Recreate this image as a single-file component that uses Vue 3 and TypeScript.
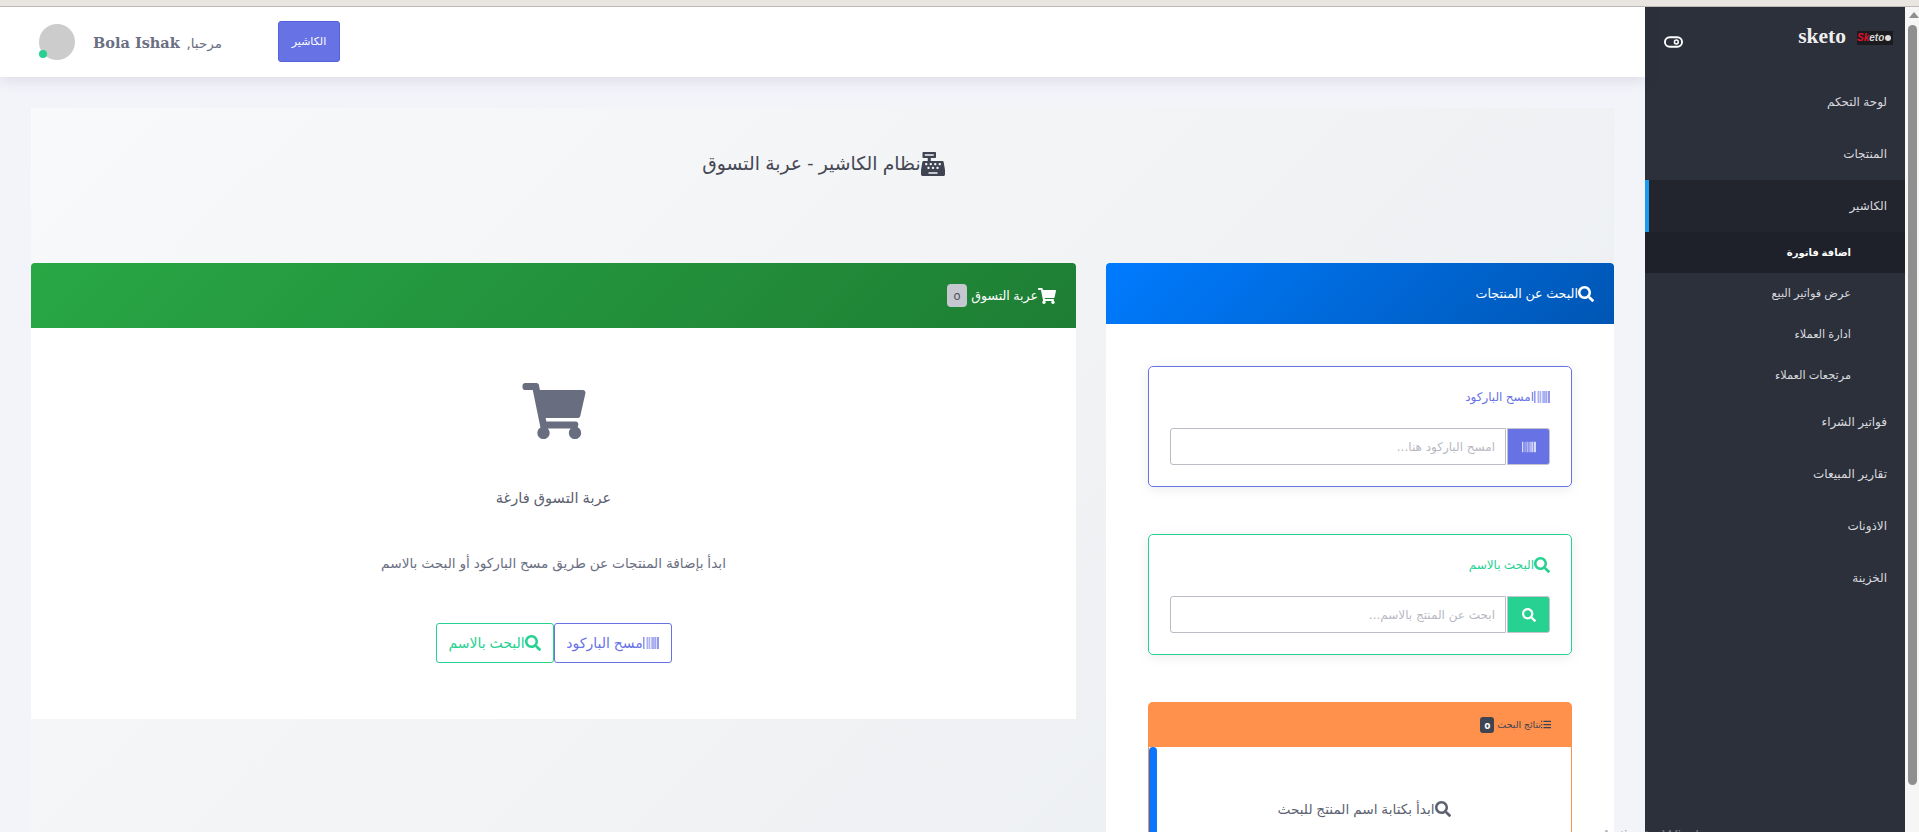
<script setup lang="ts">
const searchPath = "M505 442.7L405.3 343c-4.5-4.5-10.6-7-17-7H372c27.6-35.3 44-79.7 44-128C416 93.1 322.9 0 208 0S0 93.1 0 208s93.1 208 208 208c48.3 0 92.7-16.4 128-44v16.3c0 6.4 2.5 12.5 7 17l99.7 99.7c9.4 9.4 24.6 9.4 33.9 0l28.3-28.3c9.4-9.4 9.4-24.6.1-34zM208 336c-70.7 0-128-57.2-128-128 0-70.7 57.2-128 128-128 70.7 0 128 57.2 128 128 0 70.7-57.2 128-128 128z";
const cartPath = "M528.12 301.319l47.273-208C578.806 78.301 567.391 64 551.99 64H159.208l-9.166-44.81C147.758 8.021 137.93 0 126.529 0H24C10.745 0 0 10.745 0 24v16c0 13.255 10.745 24 24 24h69.883l70.248 343.435C147.325 417.1 136 435.222 136 456c0 30.928 25.072 56 56 56s56-25.072 56-56c0-15.674-6.447-29.835-16.824-40h209.647C430.447 426.165 424 440.326 424 456c0 30.928 25.072 56 56 56s56-25.072 56-56c0-22.172-12.888-41.332-31.579-50.405l5.517-24.276c3.413-15.018-8.002-29.319-23.403-29.319H218.117l-6.545-32h293.145c11.206 0 20.92-7.754 23.403-18.681z";
const barcodePath = "M0 448V64h18v384H0zm26.857-.273V64H36v383.727h-9.143zm27.143 0V64h8.857v383.727H54zm44.857 0V64h8.857v383.727h-8.857zm36 0V64h17.714v383.727h-17.714zm44.857 0V64h8.857v383.727h-8.857zm18 0V64h8.857v383.727h-8.857zm18 0V64h8.857v383.727h-8.857zm35.715 0V64h18v383.727h-18zm44.857 0V64h18v383.727h-18zm35.999 0V64h18.001v383.727h-18.001zm36.001 0V64h18.001v383.727h-18.001zm26.857 0V64h18v383.727h-18zm45.143 0V64h26.857v383.727h-26.857zm35.714 0V64h9.143v383.727H476zm18 .273V64h18v384h-18z";
const registerPath = "M511.1 378.8l-26.7-160c-2.6-15.4-15.9-26.7-31.6-26.7H208v-64h96c8.8 0 16-7.2 16-16V16c0-8.8-7.2-16-16-16H48c-8.8 0-16 7.2-16 16v96c0 8.8 7.2 16 16 16h96v64H59.1c-15.6 0-29 11.3-31.6 26.7L.8 378.7c-.6 3.5-.9 7-.9 10.5V480c0 17.7 14.3 32 32 32h448c17.7 0 32-14.3 32-32v-90.7c.1-3.5-.2-7-.8-10.5zM280 248c0-8.8 7.2-16 16-16h16c8.8 0 16 7.2 16 16v16c0 8.8-7.2 16-16 16h-16c-8.8 0-16-7.2-16-16v-16zm-32 64h16c8.8 0 16 7.2 16 16v16c0 8.8-7.2 16-16 16h-16c-8.8 0-16-7.2-16-16v-16c0-8.8 7.2-16 16-16zm-32-80c8.8 0 16 7.2 16 16v16c0 8.8-7.2 16-16 16h-16c-8.8 0-16-7.2-16-16v-16c0-8.8 7.2-16 16-16h16zM80 80V48h192v32H80zm40 200h-16c-8.8 0-16-7.2-16-16v-16c0-8.8 7.2-16 16-16h16c8.8 0 16 7.2 16 16v16c0 8.8-7.2 16-16 16zm16 64v-16c0-8.8 7.2-16 16-16h16c8.8 0 16 7.2 16 16v16c0 8.8-7.2 16-16 16h-16c-8.8 0-16-7.2-16-16zm216 112c0 4.4-3.6 8-8 8H168c-4.4 0-8-3.6-8-8v-16c0-4.4 3.6-8 8-8h176c4.4 0 8 3.6 8 8v16zm24-112c0 8.8-7.2 16-16 16h-16c-8.8 0-16-7.2-16-16v-16c0-8.8 7.2-16 16-16h16c8.8 0 16 7.2 16 16v16zm48-80c0 8.8-7.2 16-16 16h-16c-8.8 0-16-7.2-16-16v-16c0-8.8 7.2-16 16-16h16c8.8 0 16 7.2 16 16v16z";

const topItems = ["لوحة التحكم", "المنتجات"];
const subItems = ["عرض فواتير البيع", "ادارة العملاء", "مرتجعات العملاء"];
const bottomItems = ["فواتير الشراء", "تقارير المبيعات", "الاذونات", "الخزينة"];
</script>

<template>
  <div class="strip"></div>
  <div class="page">
    <div class="content">
      <header class="topbar">
        <div class="avatar"><span class="dot"></span></div>
        <div class="hello"><b>Bola Ishak</b> <span dir="rtl">مرحبا,</span></div>
        <button class="cashier">الكاشير</button>
      </header>

      <main class="main" dir="rtl">
        <div class="panel">
          <section class="title-card">
            <h1>
              <svg class="ic-title" viewBox="0 0 512 512"><path fill="currentColor" :d="registerPath" /></svg>
              نظام الكاشير - عربة التسوق
            </h1>
          </section>

          <div class="columns">
            <section class="search-col">
              <div class="blue-head">
                <svg class="ic15" viewBox="0 0 512 512"><path fill="currentColor" :d="searchPath" /></svg>
                البحث عن المنتجات
              </div>
              <div class="search-body">
                <div class="box purple">
                  <div class="box-title">
                    <svg class="ic15" viewBox="0 0 512 512"><path fill="currentColor" :d="barcodePath" /></svg>
                    امسح الباركود
                  </div>
                  <div class="input-row">
                    <span class="addon a-purple">
                      <svg class="ic14" viewBox="0 0 512 512"><path fill="currentColor" :d="barcodePath" /></svg>
                    </span>
                    <input class="field" type="text" placeholder="امسح الباركود هنا..." />
                  </div>
                </div>

                <div class="box green">
                  <div class="box-title">
                    <svg class="ic15" viewBox="0 0 512 512"><path fill="currentColor" :d="searchPath" /></svg>
                    البحث بالاسم
                  </div>
                  <div class="input-row">
                    <span class="addon a-green">
                      <svg class="ic14" viewBox="0 0 512 512"><path fill="currentColor" :d="searchPath" /></svg>
                    </span>
                    <input class="field" type="text" placeholder="ابحث عن المنتج بالاسم..." />
                  </div>
                </div>

                <div class="results">
                  <div class="results-head">
                    <svg class="ic-list" viewBox="0 0 16 14">
                      <path fill="currentColor" d="M0 1h2v2H0zM4 1h12v2H4zM0 6h2v2H0zM4 6h12v2H4zM0 11h2v2H0zM4 11h12v2H4z" />
                    </svg>
                    <span>نتائج البحث</span>
                    <span class="badge-dark">0</span>
                  </div>
                  <div class="results-body">
                    <span class="blue-rail"></span>
                    <p class="hint">
                      <svg class="ic15" viewBox="0 0 512 512"><path fill="currentColor" :d="searchPath" /></svg>
                      ابدأ بكتابة اسم المنتج للبحث
                    </p>
                  </div>
                </div>
              </div>
            </section>

            <section class="cart-col">
              <div class="green-head">
                <svg class="ic-cart-s" viewBox="0 0 576 512"><path fill="currentColor" :d="cartPath" /></svg>
                <span>عربة التسوق</span>
                <span class="badge-light">0</span>
              </div>
              <div class="cart-body">
                <svg class="ic-cart" viewBox="0 0 576 512"><path fill="currentColor" :d="cartPath" /></svg>
                <h2>عربة التسوق فارغة</h2>
                <p>ابدأ بإضافة المنتجات عن طريق مسح الباركود أو البحث بالاسم</p>
                <div class="cart-actions">
                  <button class="out out-purple">
                    <svg class="ic15" viewBox="0 0 512 512"><path fill="currentColor" :d="barcodePath" /></svg>
                    مسح الباركود
                  </button>
                  <button class="out out-green">
                    <svg class="ic15" viewBox="0 0 512 512"><path fill="currentColor" :d="searchPath" /></svg>
                    البحث بالاسم
                  </button>
                </div>
              </div>
            </section>
          </div>
        </div>
      </main>
    </div>

    <aside class="sidebar" dir="rtl">
      <div class="brand">
        <div class="logo"><span class="logo-s">Sk</span><span class="logo-e">eto</span><i></i></div>
        <span class="brand-name">sketo</span>
        <svg class="toggle" viewBox="0 0 20 14">
          <rect x="1" y="2" width="18" height="10" rx="5" fill="none" stroke="#fff" stroke-width="2" />
          <circle cx="13" cy="7" r="2" fill="none" stroke="#fff" stroke-width="1.6" />
        </svg>
      </div>
      <a v-for="t in topItems" :key="t" class="item">{{ t }}</a>
      <a class="item active">الكاشير</a>
      <a class="sub current">اضافة فاتورة</a>
      <a v-for="t in subItems" :key="t" class="sub">{{ t }}</a>
      <a v-for="t in bottomItems" :key="t" class="item">{{ t }}</a>
    </aside>

    <div class="scrollbar">
      <span class="arrow"></span>
      <span class="thumb"></span>
    </div>

    <div class="activate">Activate Windows</div>
  </div>
</template>

<style>
html,
body {
  margin: 0;
  height: 100%;
  overflow: hidden;
}
</style>

<style scoped>
.strip {
  height: 6px;
  background: #e9e5e1;
  border-bottom: 1px solid #bdb9b6;
}
.page {
  display: flex;
  height: 825px;
  overflow: hidden;
  position: relative;
  font-family: "Liberation Sans", "DejaVu Sans", sans-serif;
  color: #5d6170;
}
.content {
  width: 1645px;
  flex: none;
  background: #f3f4fa;
}
.topbar {
  height: 70px;
  background: #fff;
  display: flex;
  align-items: center;
  padding-left: 39px;
  box-shadow: 0 2px 14px rgba(60, 60, 80, 0.14);
  position: relative;
}
.avatar {
  width: 36px;
  height: 36px;
  border-radius: 50%;
  background: #ccc;
  position: relative;
}
.dot {
  position: absolute;
  left: 0;
  bottom: 2px;
  width: 8px;
  height: 8px;
  border-radius: 50%;
  background: #26d191;
}
.hello {
  margin-left: 18px;
  width: 185px;
  font-family: "DejaVu Serif", serif;
  font-size: 14.5px;
  white-space: nowrap;
  color: #6b6f82;
}
.hello span {
  font-family: "DejaVu Sans", sans-serif;
  font-size: 13.5px;
  margin-left: 2px;
}
.cashier {
  width: 62px;
  height: 41px;
  margin-bottom: 2px;
  background: #6772e5;
  border: 1px solid #5561d8;
  border-radius: 3px;
  color: #fff;
  font: 11px "DejaVu Sans", sans-serif;
  padding: 0;
}
.main {
  padding: 31px 31px 0;
}
.panel {
  height: 1000px;
  background: linear-gradient(135deg, #f8f9fa, #e9ecef);
}
.title-card {
  height: 155px;
  display: flex;
  justify-content: center;
  padding-top: 42px;
  box-sizing: border-box;
}
h1 {
  margin: 0;
  font-size: 18.8px;
  font-weight: 400;
  color: #454854;
  display: flex;
  align-items: center;
  height: 28px;
  margin-left: 2px;
}
.ic-title {
  width: 24px;
  height: 24px;
  color: #3f4453;
}
.columns {
  display: flex;
  gap: 30px;
}
.search-col {
  width: 508px;
  flex: none;
  background: #fff;
  height: 600px;
}
.blue-head {
  height: 61px;
  display: flex;
  align-items: center;
  padding: 0 20px;
  background: linear-gradient(135deg, #007bff, #0056b3);
  color: #fff;
  font-size: 12.7px;
  border-radius: 4px 4px 0 0;
}
.ic15 {
  width: 16px;
  height: 16px;
  flex: none;
}
.ic14 {
  width: 14px;
  height: 14px;
  flex: none;
}
.search-body {
  padding: 42px 42px 0;
}
.box {
  height: 121px;
  box-sizing: border-box;
  border: 1px solid;
  border-radius: 5px;
  padding: 20px 21px;
  margin-bottom: 47px;
  box-shadow: 0 2px 12px rgba(60, 60, 80, 0.1);
}
.purple {
  border-color: #6772e5;
  color: #6772e5;
}
.green {
  border-color: #26d191;
  color: #26d191;
}
.box-title {
  display: flex;
  align-items: center;
  height: 20px;
  font-size: 12px;
  margin-bottom: 21px;
}
.input-row {
  display: flex;
  height: 37px;
}
.addon {
  width: 43px;
  flex: none;
  border-radius: 0 3px 3px 0;
  display: flex;
  align-items: center;
  justify-content: center;
  color: #fff;
  box-sizing: border-box;
  border: 1px solid #c4c5cc;
}
.a-purple {
  background: #6772e5;
}
.a-green {
  background: #26d191;
}
.field {
  flex: 1;
  min-width: 0;
  box-sizing: border-box;
  border: 1px solid #bcbcc4;
  border-radius: 3px 0 0 3px;
  margin-right: 1px;
  padding: 0 10px;
  font: 12px "DejaVu Sans", sans-serif;
  outline: none;
}
.field::placeholder {
  color: #b7b9c2;
}
.results {
  border: 1px solid #ff914d;
  border-radius: 5px 5px 0 0;
  height: 300px;
}
.results-head {
  height: 45px;
  margin: -1px -1px 0;
  background: #ff914d;
  color: #3d4250;
  border-radius: 5px 5px 0 0;
  display: flex;
  align-items: center;
  padding: 0 21px;
  font-size: 9.5px;
}
.ic-list {
  width: 10px;
  height: 9px;
}
.badge-dark {
  background: #3f4453;
  color: #fff;
  font: 700 10px "Open Sans", sans-serif;
  font-variant-numeric: oldstyle-nums;
  width: 14px;
  height: 16px;
  margin-right: 3px;
  border-radius: 3px;
  display: flex;
  align-items: center;
  justify-content: center;
}
.results-body {
  position: relative;
  padding: 54px 0 0 8px;
}
.blue-rail {
  position: absolute;
  left: 0;
  top: 0;
  width: 8px;
  height: 260px;
  border-radius: 4px;
  background: #0a76ff;
}
.hint {
  margin: 0;
  display: flex;
  align-items: center;
  justify-content: center;
  font-size: 13.7px;
  color: #5d6170;
}
.cart-col {
  width: 1045px;
  flex: none;
}
.green-head {
  height: 65px;
  display: flex;
  align-items: center;
  padding: 0 20px;
  background: linear-gradient(135deg, #28a745, #1e7e34);
  color: #fff;
  font-size: 12.6px;
  border-radius: 4px 4px 0 0;
}
.ic-cart-s {
  width: 18px;
  height: 16px;
}
.badge-light {
  background: #c6c8d0;
  color: #3f4453;
  width: 20px;
  height: 23px;
  margin-right: 4px;
  border-radius: 4px;
  font: 12px "Open Sans", sans-serif;
  font-variant-numeric: oldstyle-nums;
  display: flex;
  align-items: center;
  justify-content: center;
}
.cart-body {
  height: 391px;
  background: #fff;
  display: flex;
  flex-direction: column;
  align-items: center;
  padding-top: 55px;
  box-sizing: border-box;
}
.ic-cart {
  width: 64px;
  height: 56px;
  color: #686d80;
}
h2 {
  margin: 50px 0 0;
  font-size: 14.6px;
  font-weight: 400;
  color: #5d6170;
}
.cart-body p {
  margin: 49px 0 0;
  font-size: 13.7px;
  color: #6b6f82;
}
.cart-actions {
  display: flex;
  margin-top: 52px;
}
.out {
  height: 40px;
  width: 118px;
  background: #fff;
  border: 1px solid;
  border-radius: 3px;
  display: flex;
  align-items: center;
  justify-content: center;
  font: 14px "Liberation Sans", "DejaVu Sans", sans-serif;
  padding: 0;
}
.out-purple {
  color: #6772e5;
  border-color: #6772e5;
}
.out-green {
  color: #26d191;
  border-color: #26d191;
}
.sidebar {
  width: 260px;
  flex: none;
  background: #2c303b;
  display: flex;
  flex-direction: column;
  font-size: 12px;
  color: #d8d9de;
}
.brand {
  height: 69px;
  display: flex;
  align-items: center;
  padding: 0 12px 0 19px;
  background: #2c303b;
}
.logo {
  width: 36px;
  height: 14px;
  background: #1b1b1f;
  font: italic 700 10px/14px "Liberation Sans", sans-serif;
  direction: ltr;
  display: flex;
  position: relative;
  margin-top: -8px;
}
.logo-s {
  color: #e3102a;
}
.logo-e {
  color: #d5d5d5;
}
.logo i {
  width: 6px;
  height: 6px;
  border-radius: 50%;
  background: #ddd;
  margin: 4px 0 0 1px;
}
.brand-name {
  margin-right: 11px;
  font: 700 21.5px "Liberation Serif", serif;
  color: #eee;
  margin-top: -10px;
}
.toggle {
  margin-right: auto;
  width: 19px;
  height: 14px;
}
.item {
  height: 52px;
  display: flex;
  align-items: center;
  padding-right: 18px;
}
.active {
  background: #22252e;
  border-left: 4px solid #1b9cf0;
  box-sizing: border-box;
}
.sub {
  height: 41px;
  display: flex;
  align-items: center;
  padding-right: 54px;
  font-size: 11.3px;
}
.current {
  background: #1e2129;
  color: #fff;
  font-weight: 700;
  font-size: 10px;
}
.scrollbar {
  flex: 1;
  position: relative;
  background: #f6f6f6;
}
.arrow {
  position: absolute;
  left: 4px;
  top: 5px;
  border: 5px solid transparent;
  border-top: 0;
  border-bottom: 6px solid #8f8f8f;
}
.thumb {
  position: absolute;
  left: 3px;
  top: 18px;
  width: 9px;
  height: 760px;
  border-radius: 5px;
  background: #8f8f8f;
}
.activate {
  position: absolute;
  left: 1601px;
  top: 821px;
  font: 16px "Liberation Sans", sans-serif;
  color: rgba(150, 150, 155, 0.7);
  white-space: nowrap;
}
</style>
